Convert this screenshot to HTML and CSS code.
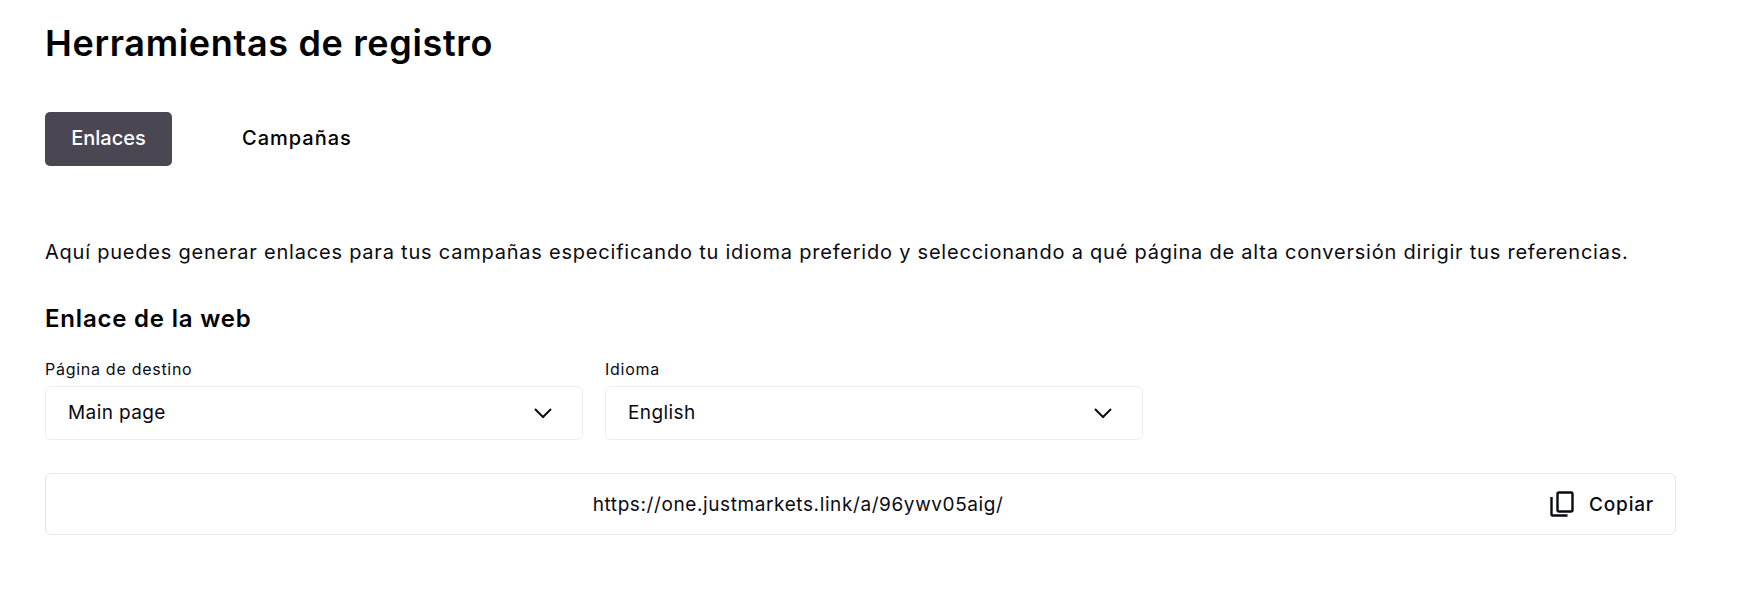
FILE: index.html
```html
<!DOCTYPE html>
<html lang="es">
<head>
    <meta charset="UTF-8">
    <title>Herramientas de registro</title>
    <link rel="stylesheet" href="styles.css">
</head>
<body>
    <div class="page">
        <h1 class="page-title">Herramientas de registro</h1>

        <div class="tabs">
            <button class="tab tab-active">Enlaces</button>
            <button class="tab">Campañas</button>
        </div>

        <p class="intro">Aquí puedes generar enlaces para tus campañas especificando tu idioma preferido y seleccionando a qué página de alta conversión dirigir tus referencias.</p>

        <h2 class="section-title">Enlace de la web</h2>

        <div class="fields">
            <div class="field">
                <label class="field-label">Página de destino</label>
                <div class="select">
                    <span>Main page</span>
                    <svg class="chevron" width="24" height="24" viewBox="0 0 24 24" fill="none" stroke="#0a0a14" stroke-width="2"><path d="M4 8l8 8 8-8"/></svg>
                </div>
            </div>
            <div class="field">
                <label class="field-label">Idioma</label>
                <div class="select">
                    <span>English</span>
                    <svg class="chevron" width="24" height="24" viewBox="0 0 24 24" fill="none" stroke="#0a0a14" stroke-width="2"><path d="M4 8l8 8 8-8"/></svg>
                </div>
            </div>
        </div>

        <div class="link-box">
            <span class="link-url">https://one.justmarkets.link/a/96ywv05aig/</span>
            <button class="copy">
                <svg width="28" height="28" viewBox="0 0 28 28" fill="none" stroke="#0a0a14" stroke-width="2.4"><rect x="9.5" y="2.5" width="15" height="19" rx="1.5"/><path d="M3.5 7v17.5a1 1 0 0 0 1 1h15"/></svg>
                <span>Copiar</span>
            </button>
        </div>
    </div>
</body>
</html>
```

FILE: styles.css
```css
/* page */
body {
    margin: 0;
    background: #fff;
    color: #0a0a14;
    font-family: "Inter", "Noto Sans", sans-serif;
}

.page {
    padding: 21px 70px 0 45px;
}

.page-title {
    margin: 0;
    font-size: 36px;
    line-height: 44px;
    font-weight: 600;
    letter-spacing: 0.65px;
    color: #000;
}

/* tabs */
.tabs {
    display: flex;
    gap: 43px;
    margin-top: 47px;
}

.tab {
    height: 54px;
    padding: 0 27px 2px;
    border: none;
    border-radius: 5px;
    background: none;
    font: 450 20px "Inter", sans-serif;
    letter-spacing: 1px;
    color: #000;
}

.tab-active {
    width: 127px;
    padding: 0 0 2px;
    letter-spacing: 0;
    background: #4a4752;
    color: #fff;
}

/* text */
.intro {
    margin: 71px 0 0;
    font-size: 20px;
    line-height: 30px;
    letter-spacing: 0.78px;
}

.section-title {
    margin: 36px 0 0;
    font-size: 24px;
    line-height: 32px;
    font-weight: 600;
    letter-spacing: 0.8px;
    color: #000;
}

/* dropdowns */
.fields {
    display: flex;
    gap: 22px;
    margin-top: 23px;
}

.field {
    width: 538px;
}

.field-label {
    display: block;
    font-size: 16px;
    line-height: 22px;
    letter-spacing: 0.72px;
    margin-bottom: 6px;
}

.select {
    display: flex;
    align-items: center;
    justify-content: space-between;
    height: 54px;
    box-sizing: border-box;
    padding: 0 27px 0 22px;
    border: 1px solid #eceded;
    border-radius: 6px;
    font-size: 19px;
    letter-spacing: 0.4px;
}

.select span {
    margin-bottom: 2px;
}

/* link row */
.link-box {
    display: flex;
    align-items: center;
    height: 62px;
    box-sizing: border-box;
    margin-top: 33px;
    padding: 0 21px 0 2px;
    border: 1px solid #e6e6e8;
    border-radius: 6px;
}

.link-url {
    flex: 1;
    text-align: center;
    font-size: 19px;
    letter-spacing: 0.6px;
}

.copy {
    display: flex;
    align-items: center;
    gap: 13px;
    padding: 0;
    border: none;
    background: none;
    font: 500 19px "Inter", sans-serif;
    letter-spacing: 0.8px;
    color: #0a0a14;
}
```
